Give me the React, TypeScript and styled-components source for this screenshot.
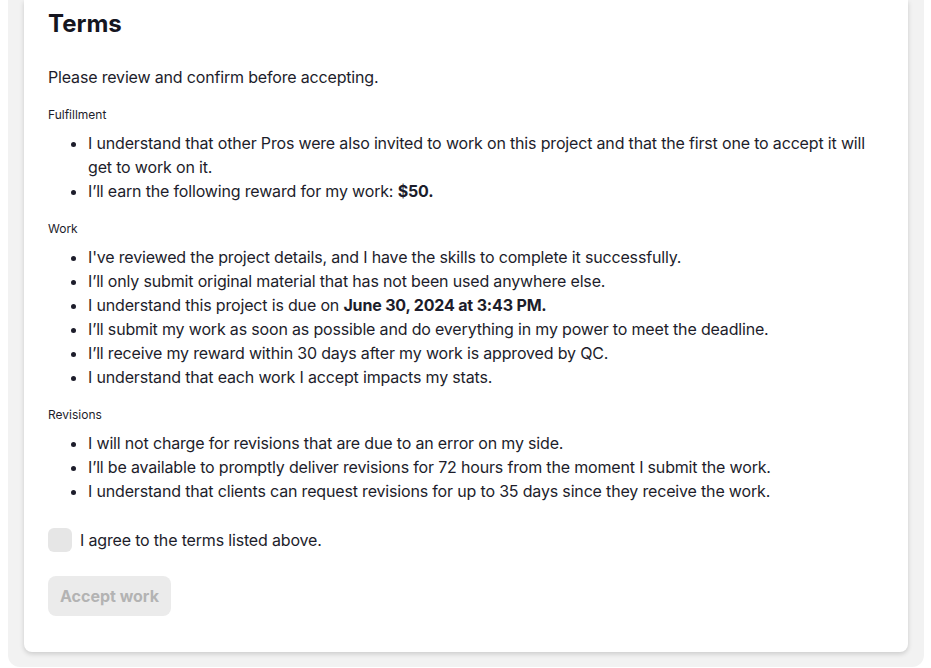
import styled, { createGlobalStyle } from 'styled-components';

const GlobalStyle = createGlobalStyle`
  body {
    margin: 0 7px 8px 8px;
    background: #ffffff;
    font-family: Inter, "Noto Sans", sans-serif;
    color: #1d1d2b;
  }
`

const Backdrop = styled.div`
  background: #f2f2f2;
  padding: 0 16px 15px;
  border-radius: 0 0 12px 12px;
`

const Card = styled.section`
  background: #ffffff;
  border-radius: 0 0 8px 8px;
  box-shadow: 0 2px 5px rgba(0, 0, 0, 0.16);
  padding: 8px 24px 36px;
`

const Title = styled.h2`
  margin: 0;
  font-size: 24px;
  line-height: 32px;
  font-weight: 700;
  color: #16161f;
`

const Intro = styled.p`
  margin: 25px 0 0;
  font-size: 16px;
  line-height: 24px;
  letter-spacing: -0.17px;
`

const Section = styled.div`
  margin-top: 18px;
`

const Label = styled.div`
  font-size: 12px;
  line-height: 16px;
  color: #1d1d2b;
`

const List = styled.ul`
  margin: 8px 0 0;
  padding-left: 40px;
  font-size: 16px;
  line-height: 24px;
  letter-spacing: -0.17px;
  b {
    font-weight: 700;
  }
`

const AgreeRow = styled.label`
  display: flex;
  align-items: center;
  gap: 8px;
  margin-top: 25px;
  font-size: 16px;
  line-height: 24px;
  letter-spacing: -0.17px;
`

const Box = styled.span`
  width: 24px;
  height: 24px;
  border-radius: 6px;
  background: #e6e6e6;
`

const Button = styled.button`
  margin-top: 24px;
  height: 40px;
  padding: 0 12px;
  border: none;
  border-radius: 8px;
  background: #ebebeb;
  color: #b3b3b3;
  font-family: inherit;
  font-size: 16px;
  font-weight: 700;
`

interface ITermSection {
  label: string;
  items: React.ReactNode[];
}

const sections: ITermSection[] = [
  {
    label: 'Fulfillment',
    items: [
      'I understand that other Pros were also invited to work on this project and that the first one to accept it will get to work on it.',
      <>I’ll earn the following reward for my work: <b>$50.</b></>,
    ],
  },
  {
    label: 'Work',
    items: [
      "I've reviewed the project details, and I have the skills to complete it successfully.",
      'I’ll only submit original material that has not been used anywhere else.',
      <>I understand this project is due on <b>June 30, 2024 at 3:43 PM.</b></>,
      'I’ll submit my work as soon as possible and do everything in my power to meet the deadline.',
      'I’ll receive my reward within 30 days after my work is approved by QC.',
      'I understand that each work I accept impacts my stats.',
    ],
  },
  {
    label: 'Revisions',
    items: [
      'I will not charge for revisions that are due to an error on my side.',
      'I’ll be available to promptly deliver revisions for 72 hours from the moment I submit the work.',
      'I understand that clients can request revisions for up to 35 days since they receive the work.',
    ],
  },
]

function App() {
  return (
    <>
      <GlobalStyle />
      <Backdrop>
        <Card>
          <Title>Terms</Title>
          <Intro>Please review and confirm before accepting.</Intro>
          {sections.map((section) => (
            <Section key={section.label}>
              <Label>{section.label}</Label>
              <List>
                {section.items.map((item, i) => (
                  <li key={i}>{item}</li>
                ))}
              </List>
            </Section>
          ))}
          <AgreeRow>
            <Box />
            I agree to the terms listed above.
          </AgreeRow>
          <Button disabled>Accept work</Button>
        </Card>
      </Backdrop>
    </>
  )
}

export default App;
